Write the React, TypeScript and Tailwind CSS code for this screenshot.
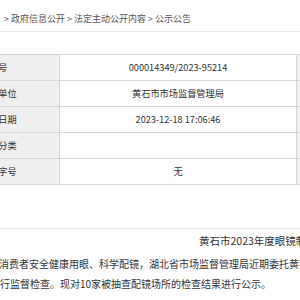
import React from 'react';

const rows = [
  { label: '索引号', value: '000014349/2023-95214' },
  { label: '发文单位', value: '黄石市市场监督管理局' },
  { label: '发布日期', value: '2023-12-18 17:06:46' },
  { label: '主题分类', value: '' },
  { label: '发文字号', value: '无' },
];

export default function App() {
  return (
    <div className="w-[300px] h-[300px] overflow-hidden bg-white text-[#333] font-['Noto_Sans_CJK_SC','Noto_Sans',sans-serif]">
      {/* breadcrumb */}
      <div className="h-[32px] border-b border-[#ececec] pt-[12px] whitespace-nowrap text-[9px] leading-[14px] text-[#555]">
        <span className="ml-[4px]">&gt; 政府信息公开 &gt; 法定主动公开内容 &gt; 公示公告</span>
      </div>

      {/* info table */}
      <div className="mt-[22px] -ml-[30px] w-[420px] border-t border-[#d6d6d6]">
        {rows.map((r) => (
          <div key={r.label} className="flex h-[26px] border-b border-[#d6d6d6] text-[9.2px]">
            <div className="w-[90px] shrink-0 bg-[#efefef] border-r border-[#d6d6d6] pl-[10px] flex items-center whitespace-nowrap">
              {r.label}
            </div>
            <div className="w-[237px] shrink-0 border-r border-[#d6d6d6] flex items-center justify-center whitespace-nowrap">
              {r.value}
            </div>
            <div className="flex-1 bg-[#efefef]" />
          </div>
        ))}
      </div>

      <div className="mt-[43px] h-px bg-[#e4e4e4]" />

      {/* title */}
      <div className="mt-[5px] pl-[199px] whitespace-nowrap text-[10.5px] leading-[14px]">
        黄石市2023年度眼镜制配场所监督检查结果公示
      </div>

      {/* body */}
      <div className="mt-[6px] text-[10px] leading-[20px] whitespace-nowrap">
        <div className="-ml-[1px]">消费者安全健康用眼、科学配镜，湖北省市场监督管理局近期委托黄石市</div>
        <div>行监督检查。现对10家被抽查配镜场所的检查结果进行公示。</div>
      </div>
    </div>
  );
}
